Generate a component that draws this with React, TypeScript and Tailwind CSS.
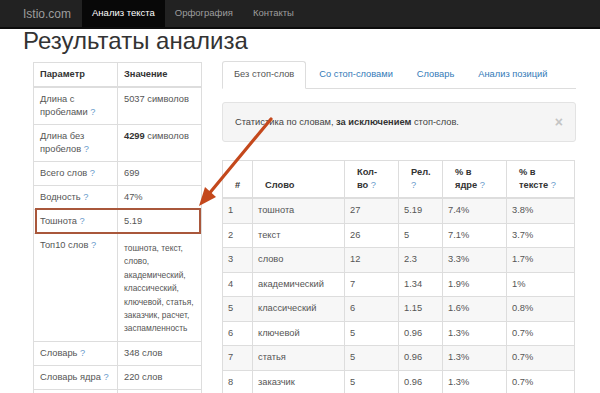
import React from "react";

const Q = () => <span className="font-normal text-[#6a9bcb]"> ?</span>;

const words = [
  ["1", "тошнота", "27", "5.19", "7.4%", "3.8%"],
  ["2", "текст", "26", "5", "7.1%", "3.7%"],
  ["3", "слово", "12", "2.3", "3.3%", "1.7%"],
  ["4", "академический", "7", "1.34", "1.9%", "1%"],
  ["5", "классический", "6", "1.15", "1.6%", "0.8%"],
  ["6", "ключевой", "5", "0.96", "1.3%", "0.7%"],
  ["7", "статья", "5", "0.96", "1.3%", "0.7%"],
  ["8", "заказчик", "5", "0.96", "1.3%", "0.7%"],
];

const top10 = [
  "тошнота, текст,",
  "слово,",
  "академический,",
  "классический,",
  "ключевой, статья,",
  "заказчик, расчет,",
  "заспамленность",
];

function ParamTable() {
  const td = "border border-[#ddd] px-[6px] py-[5px] align-top leading-[13px]";
  const th = "border border-[#ddd] border-b-2 px-[6px] py-[5px] text-left font-bold text-[#333] leading-[13px]";
  return (
    <table className="mt-px w-[168px] table-fixed border-collapse text-[9.3px] text-[#555]">
      <colgroup>
        <col className="w-[84px]" />
        <col className="w-[84px]" />
      </colgroup>
      <thead>
        <tr>
          <th className={th}>Параметр</th>
          <th className={th}>Значение</th>
        </tr>
      </thead>
      <tbody>
        <tr>
          <td className={td}>Длина с<br />пробелами<Q /></td>
          <td className={td}>5037 символов</td>
        </tr>
        <tr>
          <td className={td}>Длина без<br />пробелов<Q /></td>
          <td className={td}><b className="text-[#333]">4299</b> символов</td>
        </tr>
        <tr>
          <td className={td}>Всего слов<Q /></td>
          <td className={td}>699</td>
        </tr>
        <tr>
          <td className={td}>Водность<Q /></td>
          <td className={td}>47%</td>
        </tr>
        <tr>
          <td className={td}>Тошнота<Q /></td>
          <td className={td}>5.19</td>
        </tr>
        <tr>
          <td className={td}>Топ10 слов<Q /></td>
          <td className="whitespace-nowrap border border-[#ddd] px-[6px] pt-[8px] pb-[5px] align-top text-[8.4px] leading-[13.4px]">
            {top10.map((l) => (
              <div key={l}>{l}</div>
            ))}
          </td>
        </tr>
        <tr>
          <td className={td}>Словарь<Q /></td>
          <td className={td}>348 слов</td>
        </tr>
        <tr>
          <td className={td}>Словарь ядра<Q /></td>
          <td className={td}>220 слов</td>
        </tr>
        <tr>
          <td className={td}>&nbsp;</td>
          <td className={td}>&nbsp;</td>
        </tr>
      </tbody>
    </table>
  );
}

function WordTable() {
  const th = "border border-[#ddd] border-b-2 pl-[12px] pr-[5px] py-[5px] text-left align-bottom font-bold text-[#333] leading-[13px]";
  const td = "border border-[#ddd] px-[5px] py-[5px] leading-[13.5px]";
  return (
    <table className="mt-[18px] w-[352px] table-fixed border-collapse text-[9.3px] text-[#555]">
      <colgroup>
        <col className="w-[30px]" />
        <col className="w-[92px]" />
        <col className="w-[54px]" />
        <col className="w-[44px]" />
        <col className="w-[64px]" />
        <col className="w-[68px]" />
      </colgroup>
      <thead>
        <tr>
          <th className={th}>#</th>
          <th className={th}>Слово</th>
          <th className={th}>Кол-<br />во<Q /></th>
          <th className={th}>Рел.<br /><Q /></th>
          <th className={th}>% в<br />ядре<Q /></th>
          <th className={th}>% в<br />тексте<Q /></th>
        </tr>
      </thead>
      <tbody>
        {words.map((r, i) => (
          <tr key={r[0]} className={i % 2 === 0 ? "bg-[#f7f7f7]" : "bg-white"}>
            {r.map((c, j) => (
              <td key={j} className={td}>{c}</td>
            ))}
          </tr>
        ))}
      </tbody>
    </table>
  );
}

export default function App() {
  const tabs = ["Со стоп-словами", "Словарь", "Анализ позиций"];
  return (
    <div className="relative h-[393px] w-[600px] overflow-hidden bg-white font-['Liberation_Sans',Arial,sans-serif]">
      <nav className="flex h-[29px] items-stretch border-b-2 border-[#0c0c0c] bg-[#222]">
        <div className="ml-[23px] mr-[11px] flex items-center text-[12px] text-[#9d9d9d]">Istio.com</div>
        <div className="flex items-center bg-[#080808] px-[10px] text-[9.5px] text-white">Анализ текста</div>
        <div className="flex items-center px-[10px] text-[9.5px] text-[#9d9d9d]">Орфография</div>
        <div className="flex items-center px-[10px] text-[9.5px] text-[#9d9d9d]">Контакты</div>
      </nav>

      <h1 className="ml-[23px] text-[24px] leading-[24px] text-[#333]">Результаты анализа</h1>

      <div className="mt-[8px] flex items-start">
        <div className="ml-[33px]">
          <ParamTable />
        </div>

        <div className="ml-[20px] w-[354px]">
          <ul className="flex h-[28px] whitespace-nowrap border-b border-[#ddd] text-[9.3px]">
            <li className="-mb-px flex h-[28px] items-center rounded-t-[3px] border border-[#ddd] border-b-transparent bg-white px-[11px] text-[#555]">
              Без стоп-слов
            </li>
            {tabs.map((t) => (
              <li key={t} className="ml-[2px] flex h-[27px] items-center px-[11px] text-[#337ab7]">
                {t}
              </li>
            ))}
          </ul>

          <div className="mt-[13px] flex items-center justify-between rounded-[3px] border border-[#e3e3e3] bg-[#f5f5f5] py-[12px] pl-[12px] pr-[12px] text-[9.3px] leading-[14px] text-[#444]">
            <span>
              Статистика по словам, <b className="text-[#333]">за исключением</b> стоп-слов.
            </span>
            <span className="text-[14px] font-bold text-[#c4c4c4]">×</span>
          </div>

          <WordTable />
        </div>
      </div>

      <div className="pointer-events-none absolute left-[35px] top-[208px] h-[26px] w-[166px] border-2 border-[#a9573b]" />

      <svg className="pointer-events-none absolute left-0 top-0" width="600" height="393">
        <line x1="271" y1="119" x2="208" y2="195" stroke="#c4481c" strokeWidth="3.2" strokeLinecap="round" />
        <polygon points="199,206 216,197 205,187" fill="#c4481c" />
      </svg>
    </div>
  );
}
